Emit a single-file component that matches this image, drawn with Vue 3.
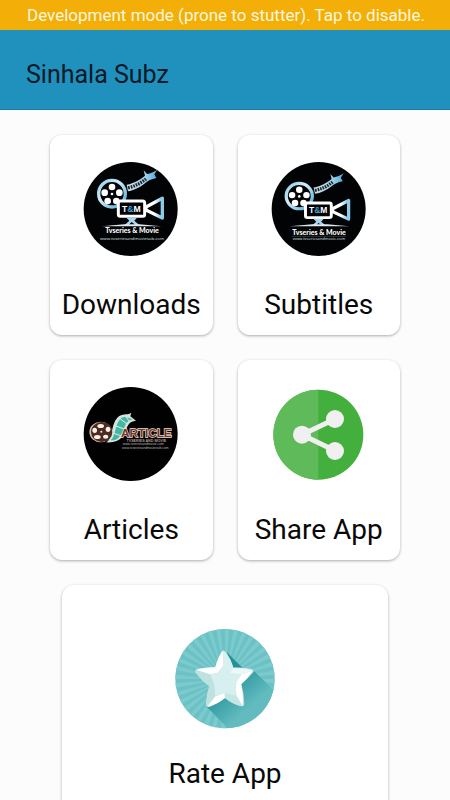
<script setup>
const rays = Array.from({ length: 36 }, (_, i) => {
  const point = (deg) => {
    const a = (deg * Math.PI) / 180
    return `${(165 + 160 * Math.cos(a)).toFixed(1)},${(165 + 160 * Math.sin(a)).toFixed(1)}`
  }
  return `165,165 ${point(i * 10)} ${point(i * 10 + 5)}`
})

const reelHoles = [[108, 96], [86, 113], [130, 113], [95, 138], [121, 138]]

const cinemaLogos = {
  downloads: { shift: 'translate(0 0)', nameX: 168, nameY: 233, site: 'www.tvseriesandmoviesub.com', siteWidth: 'wide' },
  subtitles: { shift: 'translate(0 13) scale(.98 .95)', nameX: 165, nameY: 240, site: 'www.tvseriesandmovie.com', siteWidth: 'narrow' },
}

const cards = [
  { id: 'downloads', label: 'Downloads' },
  { id: 'subtitles', label: 'Subtitles' },
  { id: 'articles', label: 'Articles' },
  { id: 'share', label: 'Share App' },
  { id: 'rate', label: 'Rate App', wide: true },
]
</script>

<template>
  <div class="screen">
    <button class="dev-banner" type="button">Development mode (prone to stutter). Tap to disable.</button>
    <header class="app-bar">
      <h1 class="title">Sinhala Subz</h1>
    </header>
    <main class="grid">
      <button v-for="card in cards" :key="card.id" type="button" class="card" :class="{ wide: card.wide }">
        <svg v-if="cinemaLogos[card.id]" class="icon" viewBox="0 0 330 330" aria-hidden="true">
          <defs>
            <linearGradient :id="card.id + '-reel'" x1="0" y1="0" x2="1" y2="1">
              <stop offset="0" stop-color="#8ccbeb" />
              <stop offset=".4" stop-color="#d3edf8" />
              <stop offset="1" stop-color="#4ba7d8" />
            </linearGradient>
            <linearGradient :id="card.id + '-film'" x1="0" y1="0" x2="1" y2="0">
              <stop offset="0" stop-color="#cfdde4" />
              <stop offset=".6" stop-color="#a3d3eb" />
              <stop offset="1" stop-color="#4fabde" />
            </linearGradient>
            <linearGradient :id="card.id + '-horn'" x1="0" y1="0" x2="1" y2="0">
              <stop offset=".5" stop-color="#fff" />
              <stop offset=".9" stop-color="#8ccbea" />
            </linearGradient>
          </defs>
          <circle cx="164" cy="162" r="141" fill="#020304" />
          <g :transform="cinemaLogos[card.id].shift">
            <path d="M152 89 C175 85 192 74 207 62 L203 46 L213 57 C224 56 234 50 244 44 L235 58 L241 69 C226 72 216 77 207 85 C192 98 172 107 156 109 Z" :fill="`url(#${card.id}-film)`" />
            <path d="M156 98 C178 94 194 84 210 72" fill="none" stroke="#20272c" stroke-width="10" stroke-dasharray="5 3" />
            <circle cx="108" cy="116" r="40" fill="#020304" :stroke="`url(#${card.id}-reel)`" stroke-width="10" />
            <circle v-for="([x, y], i) in reelHoles" :key="i" :cx="x" :cy="y" r="10" fill="#fff" />
            <circle cx="108" cy="117" r="4" fill="#fff" />
            <path d="M210 156 L259 130 L259 189 L210 165 Z" fill="#020304" :stroke="`url(#${card.id}-horn)`" stroke-width="10" stroke-linejoin="round" />
            <rect x="127" y="138" width="79" height="46" rx="6" fill="#020304" stroke="#fff" stroke-width="9" />
            <text class="monogram" x="166" y="171">T<tspan fill="#41a3d9">&amp;</tspan>M</text>
            <path d="M151 188 H183 L175 197 L190 210 H178 L167 201 L158 210 H146 L160 197 Z" fill="#a7d5ed" />
          </g>
          <path d="M77 214 L145 208 H190 L256 214 Z" fill="#dfeaf0" />
          <text class="logo-name" :x="cinemaLogos[card.id].nameX" :y="cinemaLogos[card.id].nameY">Tvseries &amp; Movie</text>
          <path v-if="card.id === 'subtitles'" d="M82 244 H246" stroke="#88929a" stroke-width="1" />
          <text class="logo-site" :class="cinemaLogos[card.id].siteWidth" :x="cinemaLogos[card.id].nameX" y="254">{{ cinemaLogos[card.id].site }}</text>
        </svg>

        <svg v-else-if="card.id === 'articles'" class="icon" viewBox="0 0 330 330" aria-hidden="true">
          <circle cx="164" cy="162" r="141" fill="#010101" />
          <path d="M90 187 C114 176 102 128 130 108 C144 99 156 106 166 98 L163 109 L180 122 C166 124 160 128 155 138 C142 164 138 190 90 187 Z" fill="#d5e3d8" />
          <path d="M104 181 C121 168 115 131 136 114 C146 108 155 113 170 118 C157 121 151 128 146 140 C136 164 128 182 104 181 Z" fill="#43b7a5" />
          <path d="M114 160 L137 168 M120 138 L147 148 M133 117 L153 132 M150 110 L160 124" stroke="#e2eee7" stroke-width="3" />
          <ellipse cx="74" cy="156" rx="34" ry="31" fill="#d5b8a5" />
          <ellipse cx="77" cy="156" rx="32" ry="30" fill="#4b2b23" />
          <g fill="#fff1e5">
            <ellipse cx="74" cy="138" rx="10" ry="6" />
            <ellipse cx="96" cy="148" rx="7" ry="8" />
            <ellipse cx="56" cy="151" rx="7" ry="8" />
            <ellipse cx="64" cy="171" rx="10" ry="6" />
            <ellipse cx="89" cy="170" rx="8" ry="6" />
            <circle cx="76" cy="155" r="3" />
          </g>
          <text class="article-word" x="211" y="171">ARTICLE</text>
          <text class="article-sub" x="211" y="185">TVSERIES AND MOVIE</text>
          <text class="article-site" x="202" y="195">www.tvseriesandmovie.com</text>
          <text class="article-site" x="208" y="206">www.tvseriesandmoviesub.com</text>
        </svg>

        <svg v-else-if="card.id === 'share'" class="icon" viewBox="0 0 330 330" aria-hidden="true">
          <circle cx="163" cy="164" r="135" fill="#43af3c" />
          <path d="M163 29 A135 135 0 0 0 163 299 Z" fill="#5fba59" />
          <path d="M213 117 L114 164 L213 212" fill="none" stroke="#f0f0f0" stroke-width="15" />
          <g fill="#f0f0f0">
            <circle cx="213" cy="117" r="27" />
            <circle cx="114" cy="164" r="27" />
            <circle cx="213" cy="213" r="27" />
          </g>
        </svg>

        <svg v-else class="icon" viewBox="0 0 330 330" aria-hidden="true">
          <defs>
            <clipPath id="badge"><circle cx="165" cy="164" r="149" /></clipPath>
            <linearGradient id="cast" gradientUnits="userSpaceOnUse" x1="165" y1="165" x2="240" y2="250">
              <stop offset="0" stop-color="#249198" />
              <stop offset="1" stop-color="#62bbbf" />
            </linearGradient>
          </defs>
          <g clip-path="url(#badge)">
            <rect width="330" height="330" fill="#6cc1c5" />
            <polygon v-for="ray in rays" :key="ray" :points="ray" fill="#7bcacd" />
            <path d="M170 84 L218 132 L249 138 L350 235 L240 350 L190 330 L110 248 Z" fill="url(#cast)" />
          </g>
          <path d="M152 87 Q161 74 170 86 Q183 105 190 131 Q221 129 246 135 Q256 140 247 148 Q231 167 214 181 Q222 207 223 238 Q222 250 210 246 Q186 240 165 222 Q144 239 119 249 Q105 250 108 237 Q109 215 117 187 Q96 172 78 148 Q71 138 83 135 Q108 130 136 130 Q141 108 152 87 Z" fill="#bfe2e1" />
          <g fill="#fff">
            <path d="M160 79 Q146 94 136 130 L142 147 L160 126 Z" />
            <path d="M78 137 Q99 131 136 130 L142 147 L121 151 Z" />
            <path d="M249 139 Q230 167 213 181 L197 178 L213 152 Z" />
            <path d="M112 248 Q141 242 165 222 L164 207 L136 217 Z" />
            <path d="M218 247 Q221 211 213 181 L197 178 L199 215 Z" />
          </g>
          <path d="M160 79 Q181 102 190 131 L178 147 L160 126 Z" fill="#d8f0ef" />
          <path d="M190 131 Q222 130 249 139 L213 152 L178 147 Z" fill="#ecf8f7" />
          <path d="M165 222 Q188 241 218 247 L199 215 L164 207 Z" fill="#c4e6e5" />
          <path d="M160 126 L178 147 L213 152 L197 178 L199 215 L164 207 L136 217 L133 183 L121 151 L142 147 Z" fill="#d7efee" />
        </svg>
        <span class="label">{{ card.label }}</span>
      </button>
    </main>
  </div>
</template>

<style>
body {
  margin: 0;
  background: #fcfcfc;
}
</style>

<style scoped>
.screen {
  display: flex;
  flex-direction: column;
  height: 100vh;
  font-family: Roboto, sans-serif;
  color: #080808;
}
button {
  border: 0;
  padding: 0;
  font-family: inherit;
  color: inherit;
  cursor: pointer;
}
.dev-banner {
  flex: none;
  padding: 1px 0 0 2px;
  background: #f4ae08;
  color: #fff8df;
  font-size: 17px;
  line-height: 29px;
  white-space: nowrap;
}
.app-bar {
  flex: none;
  display: flex;
  align-items: center;
  box-sizing: border-box;
  height: 80px;
  padding: 10px 26px 0;
  background: #2091bd;
  border-bottom: 1px solid #187da5;
}
.title {
  margin: 0;
  font-size: 25px;
  line-height: 32px;
  font-weight: 400;
  color: #071827;
}
.grid {
  flex: 1;
  min-height: 0;
  overflow-y: auto;
  scrollbar-width: none;
  display: grid;
  grid-template-columns: 1fr 1fr;
  align-content: start;
  gap: 25px;
  padding: 25px 50px;
}
.card {
  display: flex;
  flex-direction: column;
  align-items: center;
  gap: 24px;
  padding: 20px 0 14px;
  border-radius: 12px;
  background: #fff;
  box-shadow: 0 1px 3px rgba(0, 0, 0, 0.32);
}
.card.wide {
  grid-column: 1 / -1;
  margin: 0 12px;
  padding: 39px 0;
}
.icon {
  display: block;
  width: 110px;
  height: 110px;
}
.label {
  font-size: 28px;
  line-height: 32px;
  white-space: nowrap;
}
.monogram {
  font: 700 26px "Liberation Sans", sans-serif;
  fill: #fff;
  text-anchor: middle;
}
.logo-name {
  font: 900 21px Lato, sans-serif;
  fill: #fff;
  text-anchor: middle;
}
.logo-site {
  font-family: "Open Sans", sans-serif;
  fill: #dce3e8;
  text-anchor: middle;
}
.logo-site.wide {
  font-size: 13px;
}
.logo-site.narrow {
  font-size: 12px;
}
.article-word {
  font: 700 35px "Liberation Sans", sans-serif;
  fill: #6b3a30;
  stroke: #f0dcd2;
  stroke-width: 4px;
  paint-order: stroke;
  text-anchor: middle;
}
.article-sub {
  font: 700 11px "Liberation Sans", sans-serif;
  fill: #ad9993;
  text-anchor: middle;
}
.article-site {
  font: 10px "Liberation Sans", sans-serif;
  fill: #b4b4b4;
  text-anchor: middle;
}
</style>
